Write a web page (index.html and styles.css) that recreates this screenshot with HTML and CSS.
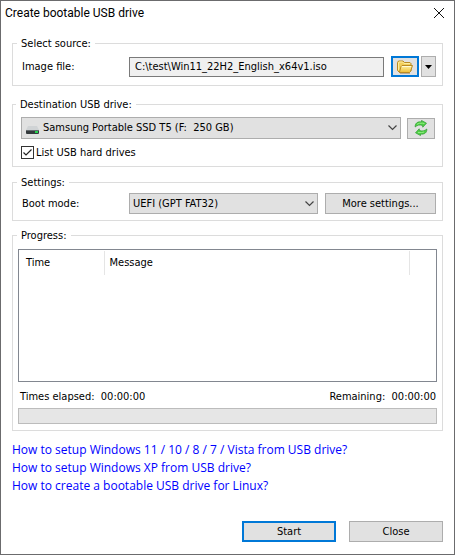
FILE: index.html
```html
<!DOCTYPE html>
<html lang="en">

<head>
    <meta charset="UTF-8">
    <meta name="viewport" content="width=device-width, initial-scale=1">
    <title>Create bootable USB drive</title>
    <link rel="stylesheet" href="styles.css">
</head>

<body>
    <form class="dialog">
        <header class="titlebar">
            <h1 class="title">Create bootable USB drive</h1>
            <button class="titlebar-close" type="button" aria-label="Close window">
                <svg width="10" height="10" viewBox="0 0 10 10">
                    <path d="M0 0L10 10M10 0L0 10" stroke="#111" fill="none" />
                </svg>
            </button>
        </header>

        <main class="content">
            <fieldset class="group group-source">
                <legend>Select source:</legend>
                <div class="row">
                    <label class="row-label" for="image-file">Image file:</label>
                    <input class="text-field" id="image-file" type="text" value="C:\test\Win11_22H2_English_x64v1.iso" readonly>
                    <div class="split-button">
                        <button class="button icon-button focused" type="button" aria-label="Browse">
                            <svg width="16" height="14" viewBox="0 0 16 14">
                                <defs>
                                    <linearGradient id="folder" x1="0" y1="0" x2="0" y2="1">
                                        <stop offset="0" stop-color="#fff3a8" />
                                        <stop offset="1" stop-color="#eebd35" />
                                    </linearGradient>
                                </defs>
                                <path d="M.5 10.5V2.5L1.5 1H6L7.5 2.5H13L14 3.5V11L12.5 12.5H2.5Z" fill="#f3cf5c" stroke="#b98a24" />
                                <path d="M1.5 10V3L2 2H5.5L7 3.5H13" fill="none" stroke="#fdeea0" />
                                <path d="M2.5 12L4 6.5L5 5.5H15.5L13.5 11.5L12.5 12.5H2.5Z" fill="url(#folder)" stroke="#b98a24" />
                                <path d="M5 6.5H14" stroke="#fffbd6" />
                                <path d="M3 13.5H13" stroke="#9a8a66" opacity=".6" />
                            </svg>
                        </button>
                        <button class="button arrow-button" type="button" aria-label="Recent files">
                            <svg width="7" height="4" viewBox="0 0 7 4">
                                <path d="M0 0H7L3.5 4Z" fill="#000" />
                            </svg>
                        </button>
                    </div>
                </div>
            </fieldset>

            <fieldset class="group group-drive">
                <legend>Destination USB drive:</legend>
                <div class="row">
                    <div class="select-box drive-box">
                        <svg class="drive-icon" width="13" height="9" viewBox="0 0 13 9">
                            <path d="M2 0H11L13 4H0Z" fill="#d0d3d5" />
                            <rect y="4" width="13" height="4" rx="1" fill="#343a3d" />
                            <path d="M0 4.5H13" stroke="#666c70" />
                            <rect x="9" y="5" width="3" height="2" fill="#25d34d" />
                        </svg>
                        <select class="select" id="drive" aria-label="Destination USB drive">
                            <option>Samsung Portable SSD T5 (F:&nbsp; 250 GB)</option>
                        </select>
                        <svg class="chevron" width="9" height="6" viewBox="0 0 9 6">
                            <path d="M.5 .5L4.5 4.5L8.5 .5" stroke="#444" stroke-width="1.2" fill="none" />
                        </svg>
                    </div>
                    <button class="button icon-button" type="button" aria-label="Refresh drives">
                        <svg width="14" height="16" viewBox="0 0 14 16">
                            <path id="arrow" d="M1.2 7C.8 3.5 3.5 1.3 7.5 2L7.5 .4L12.5 3.2L8.8 7.2L8.4 5.4C5.5 4.6 3.5 5 1.2 7Z" fill="#4fcf45" stroke="#2e9a30" stroke-width=".7" />
                            <use href="#arrow" transform="rotate(180 7 8)" />
                            <path d="M3 4.3Q5 2.8 8.5 3.2L10.5 3.6M10 12Q7.5 13 4 12.5" fill="none" stroke="#93ee84" />
                        </svg>
                    </button>
                </div>
                <div class="check-row">
                    <div class="check-box">
                        <input class="checkbox" id="list-hard" type="checkbox" checked>
                        <svg class="tick" width="13" height="13" viewBox="0 0 13 13">
                            <path d="M2.5 6.5L5 9L10.5 3.5" stroke="#222" stroke-width="1.2" fill="none" />
                        </svg>
                    </div>
                    <label for="list-hard">List USB hard drives</label>
                </div>
            </fieldset>

            <fieldset class="group group-settings">
                <legend>Settings:</legend>
                <div class="row">
                    <label class="row-label" for="boot-mode">Boot mode:</label>
                    <div class="select-box">
                        <select class="select" id="boot-mode">
                            <option>UEFI (GPT FAT32)</option>
                        </select>
                        <svg class="chevron" width="9" height="6" viewBox="0 0 9 6">
                            <path d="M.5 .5L4.5 4.5L8.5 .5" stroke="#444" stroke-width="1.2" fill="none" />
                        </svg>
                    </div>
                    <button class="button more-button" type="button">More settings...</button>
                </div>
            </fieldset>

            <fieldset class="group group-progress">
                <legend>Progress:</legend>
                <div class="log">
                    <table class="log-table">
                        <thead>
                            <tr>
                                <th class="col-time" scope="col">Time</th>
                                <th scope="col">Message</th>
                                <td class="col-end"></td>
                            </tr>
                        </thead>
                        <tbody></tbody>
                    </table>
                </div>
                <div class="times">
                    <span>Times elapsed:&nbsp; 00:00:00</span>
                    <span>Remaining:&nbsp; 00:00:00</span>
                </div>
                <progress class="progress" value="0" max="100" aria-label="Progress"></progress>
            </fieldset>

            <nav class="links">
                <a href="#">How to setup Windows 11 / 10 / 8 / 7 / Vista from USB drive?</a>
                <a href="#">How to setup Windows XP from USB drive?</a>
                <a href="#">How to create a bootable USB drive for Linux?</a>
            </nav>
        </main>

        <footer class="actions">
            <button class="button action-button focused" type="button">Start</button>
            <button class="button action-button" type="button">Close</button>
        </footer>
    </form>
</body>

</html>
```

FILE: styles.css
```css
* {
    box-sizing: border-box;
}

body {
    margin: 0;
    background: #fff;
    color: #000;
    font: 11px/14px "DejaVu Sans Condensed", "DejaVu Sans", sans-serif;
}

button,
input,
select {
    margin: 0;
    font: inherit;
    color: inherit;
}

.dialog {
    display: flex;
    flex-direction: column;
    min-height: 100vh;
    border: 1px solid #6b6b6d;
}

/* title bar */
.titlebar {
    display: flex;
    align-items: center;
    justify-content: space-between;
    height: 24px;
    padding: 0 10px 0 4px;
}

.title {
    margin: 0;
    font: 12px/16px Roboto, "Open Sans", sans-serif;
}

.titlebar-close {
    display: flex;
    padding: 0;
    border: 0;
    background: none;
}

.content {
    flex: 1;
    padding: 12px 11px 0;
}

/* group boxes */
.group {
    min-width: 0;
    margin: 0 0 12px;
    padding: 0 7px;
    border: 1px solid #dcdcdc;
}

.group legend {
    padding: 0 4px;
    line-height: 13px;
}

.group-source {
    padding: 6px 6px 8px 9px;
}

.group-drive {
    margin-bottom: 9px;
    padding: 6px 7px 7px 8px;
}

.group-settings {
    margin-bottom: 8px;
    padding: 4px 6px 6px 9px;
}

.group-progress {
    padding: 7px 5px 6px;
    margin-bottom: 10px;
}

.group-source legend,
.group-drive legend,
.group-settings legend {
    margin-left: -5px;
}

.group-progress legend {
    margin-left: -1px;
}

.row {
    display: flex;
    align-items: center;
    gap: 7px;
}

.group-drive .row {
    gap: 6px;
}

.row-label {
    width: 100px;
}

.text-field {
    flex: 1;
    min-width: 0;
    height: 20px;
    padding: 0 5px;
    border: 1px solid #7a7a7a;
    background: #f0f0f0;
}

.split-button {
    display: flex;
    gap: 2px;
}

/* buttons */
.button {
    display: flex;
    align-items: center;
    justify-content: center;
    height: 21px;
    padding: 0;
    border: 1px solid #adadad;
    background: #e1e1e1;
}

.focused {
    border: 2px solid #0078d7;
}

.icon-button {
    width: 28px;
}

.arrow-button {
    width: 15px;
}

.more-button {
    width: 111px;
}

/* drop-downs */
.select-box {
    position: relative;
    flex: 1;
    min-width: 0;
}

.select {
    display: block;
    appearance: none;
    width: 100%;
    height: 21px;
    padding: 0 20px 0 3px;
    border: 1px solid #adadad;
    border-radius: 0;
    background: #e1e1e1;
}

.drive-box .select {
    height: 22px;
    padding-left: 21px;
}

.drive-icon {
    position: absolute;
    left: 5px;
    top: 9px;
    pointer-events: none;
}

.chevron {
    position: absolute;
    right: 4px;
    top: 8px;
    pointer-events: none;
}

/* tick box */
.check-row {
    display: flex;
    align-items: center;
    gap: 2px;
    height: 13px;
    margin-top: 7px;
}

.check-box {
    position: relative;
    height: 13px;
}

.checkbox {
    display: block;
    appearance: none;
    width: 13px;
    height: 13px;
    border: 1px solid #333;
    background: #fff;
}

.tick {
    position: absolute;
    left: 0;
    top: 0;
    pointer-events: none;
}

.checkbox:not(:checked) + .tick {
    display: none;
}

/* message log */
.log {
    height: 133px;
    padding: 1px 0;
    border: 1px solid #828790;
}

.log-table {
    width: 100%;
    table-layout: fixed;
    border-collapse: collapse;
}

.log-table th {
    height: 24px;
    padding: 0 5px;
    border-right: 1px solid #e5e5e5;
    font-weight: normal;
    text-align: left;
}

.log-table .col-time {
    width: 85px;
    padding-left: 7px;
}

.col-end {
    width: 27px;
    padding: 0;
}

.times {
    display: flex;
    justify-content: space-between;
    padding: 8px 1px 4px 2px;
}

.progress {
    display: block;
    appearance: none;
    width: 100%;
    height: 16px;
    border: 1px solid #bcbcbc;
    background: #e6e6e6;
}

.progress::-webkit-progress-bar {
    background: #e6e6e6;
}

.progress::-webkit-progress-value {
    background: #06b025;
}

.links {
    display: flex;
    flex-direction: column;
    align-items: flex-start;
    font: 12px/18px "Open Sans", "Noto Sans", sans-serif;
}

.links a {
    color: #0000ff;
    text-decoration: none;
}

.actions {
    display: flex;
    justify-content: flex-end;
    gap: 13px;
    padding: 12px 11px;
}

.action-button {
    width: 94px;
}
```
